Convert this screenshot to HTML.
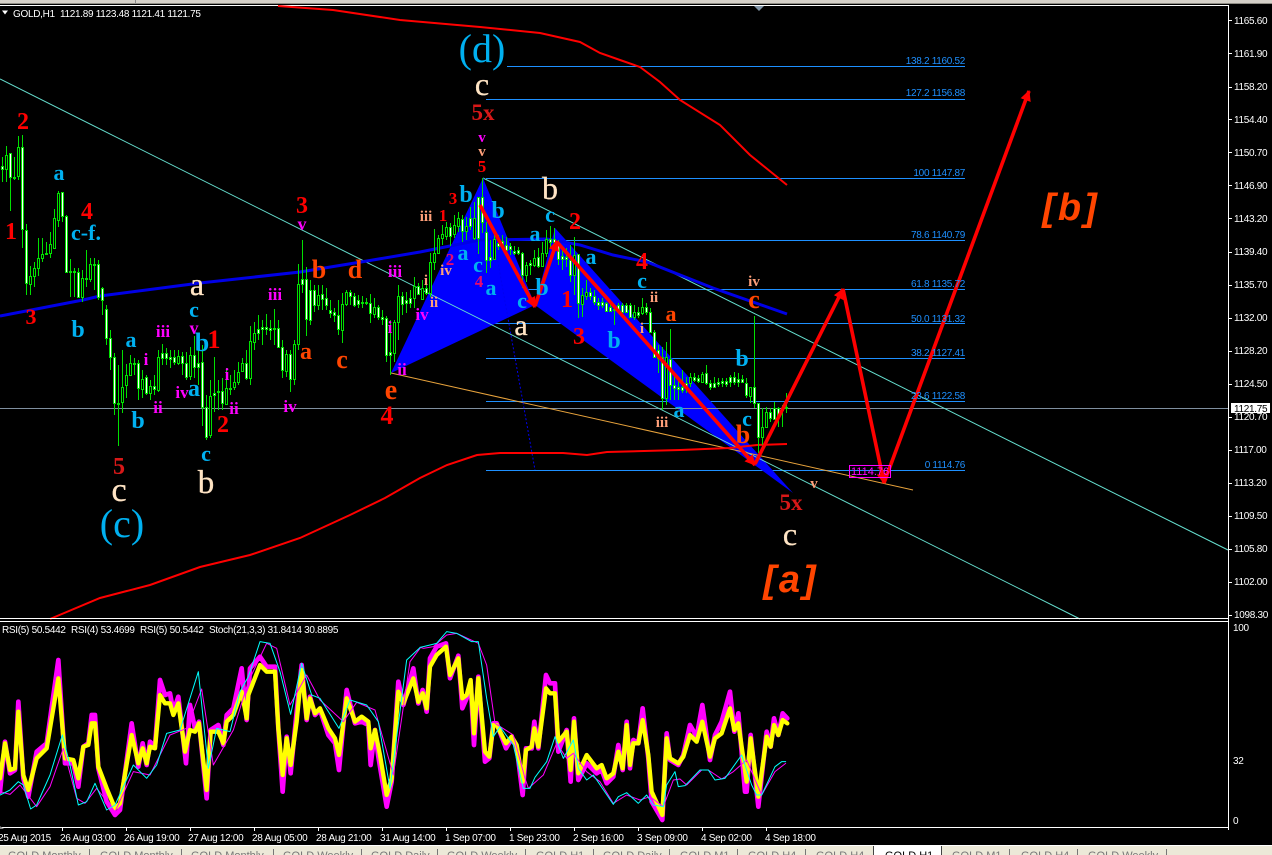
<!DOCTYPE html>
<html><head><meta charset="utf-8"><title>GOLD,H1</title>
<style>
html,body{margin:0;padding:0;background:#000;width:1272px;height:855px;overflow:hidden}
svg{display:block;position:absolute;left:0;top:0}
text{font-family:"Liberation Serif",serif}
.u text,text.u{font-family:"Liberation Sans",sans-serif;font-size:10px;letter-spacing:-.3px}
.l text{text-anchor:middle}
.r{fill:#f00;font-weight:bold}.b{fill:#00b0f0}.w{fill:#ffe4c4;stroke:#ffe4c4;stroke-width:.3}.m{fill:#f0f}.o{fill:#ff4500;font-weight:bold}.s{fill:#ffa07a}.c{fill:#e60a6e;font-weight:bold}.d{fill:#d81818;font-weight:bold}
.t text{font-family:"Liberation Sans",sans-serif;font-size:11px;fill:#777}
</style></head><body>
<svg width="1272" height="855" viewBox="0 0 1272 855" xmlns="http://www.w3.org/2000/svg">
<defs><marker id="h" viewBox="0 0 10 10" refX="9" refY="5" markerWidth="3" markerHeight="3" orient="auto"><path d="M0 0L10 5L0 10z" fill="#f00"/></marker></defs>
<rect width="1272" height="855" fill="#000"/>
<rect width="1272" height="3" fill="#d4d0c8"/><rect y="3" width="1272" height="1" fill="#8f8d85"/>
<rect x="135" width="1" height="3" fill="#888"/>
<rect y="5" width="1229" height="1" fill="#fff"/>
<path d="M754 6H764L759 11z" fill="#8296a8"/>

<!-- fibo lines -->
<path d="M507 66.5H965M486 99.5H965M486 178.5H965M486 240.5H965M486 289.5H965M486 323.5H965M486 358.5H965M486 401.5H965M486 470.5H965" stroke="#1e90ff" fill="none" shape-rendering="crispEdges"/>
<!-- blue harmonic -->
<path d="M391 373L483 178L535 305z" fill="#00f"/>
<path d="M535 305L555 228L793 493z" fill="#00f"/>
<!-- price line -->
<path d="M0 408.5H1228" stroke="#7f8f9f" shape-rendering="crispEdges"/>
<!-- trendlines -->
<path d="M0 79L1080 619M483 178L1228 550" stroke="#66e0d0" fill="none"/>
<path d="M391 373L913 490" stroke="#e8a33c" fill="none"/>
<path d="M483 178L535 470" stroke="#0000f0" stroke-dasharray="2 2" fill="none"/>
<!-- MA -->
<path d="M0 316L83 300L100 296L200 283L300 272L367 261L420 252L430 250L480 240L547 239L580 245L613 255L647 262L713 288L787 314" stroke="#0000e6" stroke-width="3" fill="none"/>
<path d="M278 6L333 10L400 20L480 27L540 33L580 42L600 53L620 60L640 67L660 82L680 100L720 125L750 155L787 185" stroke="#f00" stroke-width="2" fill="none"/>
<path d="M50 619L100 598L150 585L200 567L250 555L300 538L350 515L385 498L420 478L447 465L477 455L500 453L563 453L587 455L607 452L680 450L730 448L757 445L787 444" stroke="#f00" stroke-width="2" fill="none"/>

<!-- candle wicks -->
<path shape-rendering="crispEdges" stroke="#00e000" fill="none" d="M2.5 157V182M6.5 146V182M10.5 153V211M14.5 157V180M18.5 136V180M22.5 135V248M26.5 224V295M30.5 266V295M34.5 262V287M38.5 238V276M42.5 238V262M46.5 242V255M50.5 232V258M54.5 209V248M58.5 191V227M62.5 192V222M66.5 215V273M70.5 259V297M74.5 268V297M78.5 268V297M82.5 270V302M86.5 250V287M90.5 258V282M94.5 258V290M98.5 260V300M102.5 287V315M106.5 305V345M110.5 330V370M114.5 353V415M118.5 365V446M122.5 350V413M126.5 364V398M130.5 355V372M134.5 358V375M138.5 360V400M142.5 370V398M146.5 375V395M150.5 380V400M154.5 375V395M158.5 350V392M162.5 344V365M166.5 348V365M170.5 350V368M174.5 350V365M178.5 350V365M182.5 352V375M186.5 352V380M190.5 347V380M194.5 336V378M198.5 335V385M202.5 345V426M206.5 395V440M210.5 380V438M214.5 357V412M218.5 380V410M222.5 378V410M226.5 368V405M230.5 375V395M234.5 370V390M238.5 362V385M242.5 358V372M246.5 350V380M250.5 326V385M254.5 322V350M258.5 315V340M262.5 320V345M266.5 314V335M270.5 320V340M274.5 309V345M278.5 320V348M282.5 340V378M286.5 350V377M290.5 350V392M294.5 340V385M298.5 264V350M302.5 240V293M306.5 267V336M310.5 280V325M314.5 285V312M318.5 285V310M322.5 285V310M326.5 288V310M330.5 300V318M334.5 308V322M338.5 300V335M342.5 293V343M346.5 290V306M350.5 290V305M354.5 293V307M358.5 295V308M362.5 296V308M366.5 298V305M370.5 294V323M374.5 298V318M378.5 305V320M382.5 310V325M386.5 316V362M390.5 320V375M394.5 320V362M398.5 285V340M402.5 292V315M406.5 292V313M410.5 290V308M414.5 277V308M418.5 283V295M422.5 280V300M426.5 285V295M430.5 253V297M434.5 229V270M438.5 235V253M442.5 225V245M446.5 222V240M450.5 223V246M454.5 215V238M458.5 212V232M462.5 215V242M466.5 217V240M470.5 207V230M474.5 202V240M478.5 197V254M482.5 178V233M486.5 222V273M490.5 240V268M494.5 235V260M498.5 235V250M502.5 235V250M506.5 237V252M510.5 243V255M514.5 246V255M518.5 247V255M522.5 252V288M526.5 262V282M530.5 260V275M534.5 250V267M538.5 248V268M542.5 242V267M546.5 230V257M550.5 226V248M554.5 228V248M558.5 240V265M562.5 250V270M566.5 248V267M570.5 245V282M574.5 237V295M578.5 254V318M582.5 288V317M586.5 280V300M590.5 288V300M594.5 290V305M598.5 298V310M602.5 298V308M606.5 302V312M610.5 302V312M614.5 308V325M618.5 303V312M622.5 303V313M626.5 303V313M630.5 303V318M634.5 305V320M638.5 307V318M642.5 298V315M646.5 303V315M650.5 308V333M654.5 330V358M658.5 345V373M662.5 347V410M666.5 342V405M670.5 329V400M674.5 373V400M678.5 377V400M682.5 370V393M686.5 377V393M690.5 373V387M694.5 373V382M698.5 375V383M702.5 372V383M706.5 365V385M710.5 380V390M714.5 377V388M718.5 378V387M722.5 378V387M726.5 378V387M730.5 375V387M734.5 372V385M738.5 373V387M742.5 375V383M746.5 378V398M750.5 387V403M754.5 316V408M758.5 403V453M762.5 408V445M766.5 407V428M770.5 408V422M774.5 402V420M778.5 407V427M782.5 405V427M786.5 393V413"/>
<!-- white bodies -->
<path shape-rendering="crispEdges" stroke="#00e000" fill="#fff" d="M1.5 166.5h2v3h-2zM9.5 153.5h2v24h-2zM13.5 177.5h2v1h-2zM21.5 147.5h2v82h-2zM25.5 230.5h2v53h-2zM45.5 253.5h2v1h-2zM61.5 192.5h2v24h-2zM65.5 216.5h2v56h-2zM69.5 271.5h2v1h-2zM73.5 271.5h2v1h-2zM77.5 272.5h2v25h-2zM85.5 278.5h2v1h-2zM93.5 264.5h2v1h-2zM97.5 264.5h2v33h-2zM101.5 288.5h2v12h-2zM105.5 309.5h2v29h-2zM109.5 338.5h2v19h-2zM113.5 357.5h2v46h-2zM117.5 403.5h2v1h-2zM133.5 363.5h2v1h-2zM137.5 363.5h2v25h-2zM145.5 377.5h2v16h-2zM153.5 386.5h2v3h-2zM161.5 353.5h2v5h-2zM165.5 353.5h2v5h-2zM169.5 357.5h2v2h-2zM173.5 357.5h2v5h-2zM181.5 356.5h2v7h-2zM185.5 363.5h2v14h-2zM193.5 355.5h2v12h-2zM197.5 363.5h2v4h-2zM201.5 362.5h2v45h-2zM205.5 407.5h2v30h-2zM213.5 393.5h2v2h-2zM217.5 391.5h2v1h-2zM221.5 391.5h2v12h-2zM229.5 388.5h2v1h-2zM245.5 363.5h2v15h-2zM257.5 329.5h2v4h-2zM261.5 327.5h2v2h-2zM265.5 327.5h2v2h-2zM269.5 328.5h2v2h-2zM273.5 328.5h2v1h-2zM277.5 328.5h2v19h-2zM281.5 347.5h2v23h-2zM289.5 354.5h2v25h-2zM301.5 279.5h2v5h-2zM305.5 279.5h2v40h-2zM309.5 290.5h2v30h-2zM313.5 290.5h2v15h-2zM321.5 294.5h2v5h-2zM325.5 298.5h2v7h-2zM329.5 310.5h2v3h-2zM333.5 312.5h2v3h-2zM337.5 315.5h2v14h-2zM349.5 292.5h2v4h-2zM353.5 296.5h2v9h-2zM357.5 300.5h2v4h-2zM361.5 302.5h2v1h-2zM365.5 302.5h2v1h-2zM369.5 303.5h2v10h-2zM377.5 307.5h2v10h-2zM381.5 317.5h2v2h-2zM385.5 318.5h2v37h-2zM389.5 352.5h2v3h-2zM401.5 296.5h2v8h-2zM405.5 300.5h2v3h-2zM409.5 298.5h2v5h-2zM417.5 286.5h2v8h-2zM425.5 288.5h2v5h-2zM449.5 227.5h2v9h-2zM461.5 219.5h2v12h-2zM469.5 218.5h2v8h-2zM477.5 197.5h2v41h-2zM481.5 197.5h2v25h-2zM485.5 232.5h2v28h-2zM489.5 257.5h2v3h-2zM497.5 243.5h2v3h-2zM501.5 241.5h2v6h-2zM505.5 245.5h2v5h-2zM509.5 246.5h2v3h-2zM513.5 251.5h2v2h-2zM517.5 250.5h2v3h-2zM521.5 253.5h2v22h-2zM529.5 263.5h2v2h-2zM537.5 257.5h2v9h-2zM549.5 239.5h2v3h-2zM553.5 239.5h2v3h-2zM557.5 244.5h2v15h-2zM561.5 256.5h2v3h-2zM565.5 257.5h2v2h-2zM569.5 260.5h2v15h-2zM577.5 254.5h2v49h-2zM589.5 292.5h2v4h-2zM593.5 296.5h2v6h-2zM597.5 302.5h2v3h-2zM601.5 302.5h2v3h-2zM605.5 303.5h2v8h-2zM609.5 307.5h2v4h-2zM613.5 309.5h2v1h-2zM617.5 305.5h2v5h-2zM621.5 305.5h2v7h-2zM625.5 305.5h2v7h-2zM629.5 305.5h2v12h-2zM637.5 312.5h2v3h-2zM645.5 307.5h2v5h-2zM649.5 312.5h2v20h-2zM653.5 332.5h2v25h-2zM657.5 350.5h2v8h-2zM661.5 357.5h2v41h-2zM669.5 359.5h2v26h-2zM673.5 385.5h2v3h-2zM677.5 387.5h2v2h-2zM681.5 387.5h2v3h-2zM685.5 383.5h2v4h-2zM693.5 377.5h2v3h-2zM697.5 378.5h2v3h-2zM705.5 373.5h2v10h-2zM709.5 383.5h2v4h-2zM713.5 383.5h2v4h-2zM717.5 382.5h2v2h-2zM721.5 381.5h2v2h-2zM725.5 381.5h2v3h-2zM729.5 377.5h2v5h-2zM733.5 377.5h2v5h-2zM737.5 379.5h2v3h-2zM741.5 379.5h2v3h-2zM745.5 383.5h2v12h-2zM753.5 387.5h2v16h-2zM757.5 403.5h2v34h-2zM769.5 412.5h2v6h-2zM773.5 408.5h2v11h-2zM777.5 408.5h2v7h-2zM781.5 408.5h2v2h-2zM785.5 407.5h2v1h-2z"/>
<!-- hollow bodies -->
<path shape-rendering="crispEdges" stroke="#00e000" fill="#000" d="M5.5 155.5h2v14h-2zM17.5 147.5h2v29h-2zM29.5 276.5h2v8h-2zM33.5 268.5h2v8h-2zM37.5 258.5h2v10h-2zM41.5 254.5h2v4h-2zM49.5 244.5h2v9h-2zM53.5 218.5h2v30h-2zM57.5 193.5h2v27h-2zM81.5 278.5h2v19h-2zM89.5 264.5h2v15h-2zM121.5 387.5h2v15h-2zM125.5 375.5h2v10h-2zM129.5 363.5h2v12h-2zM141.5 379.5h2v10h-2zM149.5 386.5h2v7h-2zM157.5 357.5h2v33h-2zM177.5 356.5h2v7h-2zM189.5 355.5h2v21h-2zM209.5 396.5h2v39h-2zM225.5 388.5h2v16h-2zM233.5 382.5h2v5h-2zM237.5 372.5h2v10h-2zM241.5 363.5h2v8h-2zM249.5 341.5h2v37h-2zM253.5 333.5h2v9h-2zM285.5 354.5h2v17h-2zM293.5 344.5h2v35h-2zM297.5 284.5h2v60h-2zM317.5 295.5h2v10h-2zM341.5 304.5h2v26h-2zM345.5 292.5h2v12h-2zM373.5 307.5h2v7h-2zM393.5 322.5h2v31h-2zM397.5 296.5h2v26h-2zM413.5 286.5h2v12h-2zM421.5 288.5h2v11h-2zM429.5 262.5h2v31h-2zM433.5 253.5h2v9h-2zM437.5 238.5h2v15h-2zM441.5 234.5h2v4h-2zM445.5 227.5h2v9h-2zM453.5 225.5h2v9h-2zM457.5 218.5h2v8h-2zM465.5 226.5h2v5h-2zM473.5 218.5h2v20h-2zM493.5 239.5h2v20h-2zM525.5 265.5h2v10h-2zM533.5 258.5h2v7h-2zM541.5 253.5h2v13h-2zM545.5 239.5h2v14h-2zM573.5 255.5h2v20h-2zM581.5 295.5h2v9h-2zM585.5 292.5h2v4h-2zM633.5 312.5h2v5h-2zM641.5 307.5h2v6h-2zM665.5 357.5h2v41h-2zM689.5 377.5h2v6h-2zM701.5 374.5h2v8h-2zM749.5 387.5h2v9h-2zM761.5 427.5h2v10h-2zM765.5 412.5h2v15h-2z"/>

<!-- red wave arrows -->
<g stroke="#f00" stroke-width="3.6" fill="none">
<line x1="480" y1="205" x2="535" y2="307" marker-end="url(#h)"/>
<line x1="535" y1="306" x2="557" y2="241" marker-end="url(#h)"/>
<line x1="557" y1="242" x2="755" y2="465" marker-end="url(#h)"/>
<line x1="755" y1="464" x2="843" y2="289" marker-end="url(#h)"/>
<line x1="843" y1="289" x2="884" y2="483" marker-end="url(#h)"/>
<line x1="884" y1="483" x2="1029" y2="91" marker-end="url(#h)"/>
</g>

<!-- magenta price box -->
<rect x="849.5" y="465.5" width="41" height="12" fill="none" stroke="#f0f"/>
<text x="851" y="475" font-size="11" fill="#f0f" style="font-family:'Liberation Sans',sans-serif">1114.76</text>

<!-- fibo labels -->
<g class="u" fill="#1e90ff" text-anchor="end">
<text x="965" y="64">138.2 1160.52</text><text x="965" y="96">127.2 1156.88</text><text x="965" y="176">100 1147.87</text><text x="965" y="238">78.6 1140.79</text><text x="965" y="287">61.8 1135.72</text><text x="965" y="322">50.0 1131.32</text><text x="965" y="356">38.2 1127.41</text><text x="965" y="399">23.6 1122.58</text><text x="965" y="468">0 1114.76</text>
</g>

<!-- wave labels -->
<g class="l">
<text x="482" y="62" font-size="40" class="b">(d)</text>
<text x="482" y="95" font-size="32" class="w">c</text>
<text x="483" y="120" font-size="23" class="d">5x</text>
<text x="482" y="142" font-size="15" class="m" font-weight="bold">v</text>
<text x="482" y="156" font-size="15" class="s" font-weight="bold">v</text>
<text x="482" y="172" font-size="17" class="r">5</text>
<text x="23" y="129" font-size="24" class="r">2</text>
<text x="59" y="180" font-size="22" class="b" font-weight="bold">a</text>
<text x="87" y="219" font-size="24" class="r">4</text>
<text x="11" y="239" font-size="24" class="r">1</text>
<text x="86" y="240" font-size="22" class="b" font-weight="bold">c-f.</text>
<text x="31" y="324" font-size="22" class="r">3</text>
<text x="78" y="337" font-size="24" class="b" font-weight="bold">b</text>
<text x="302" y="213" font-size="24" class="r">3</text>
<text x="302" y="230" font-size="18" class="m" font-weight="bold">v</text>
<text x="319" y="278" font-size="26" class="o">b</text>
<text x="355" y="278" font-size="26" class="o">d</text>
<text x="395" y="277" font-size="17" class="m" font-weight="bold">iii</text>
<text x="197" y="295" font-size="32" class="w">a</text>
<text x="275" y="300" font-size="17" class="m" font-weight="bold">iii</text>
<text x="194" y="317" font-size="22" class="b" font-weight="bold">c</text>
<text x="194" y="334" font-size="18" class="m" font-weight="bold">v</text>
<text x="202" y="351" font-size="26" class="b" font-weight="bold">b</text>
<text x="214" y="348" font-size="26" class="r">1</text>
<text x="131" y="347" font-size="22" class="b" font-weight="bold">a</text>
<text x="146" y="365" font-size="17" class="m" font-weight="bold">i</text>
<text x="163" y="337" font-size="17" class="m" font-weight="bold">iii</text>
<text x="158" y="413" font-size="17" class="m" font-weight="bold">ii</text>
<text x="138" y="428" font-size="24" class="b" font-weight="bold">b</text>
<text x="182" y="398" font-size="17" class="m" font-weight="bold">iv</text>
<text x="194" y="396" font-size="24" class="b" font-weight="bold">a</text>
<text x="119" y="474" font-size="24" class="d">5</text>
<text x="119" y="501" font-size="34" class="w">c</text>
<text x="122" y="537" font-size="40" class="b">(c)</text>
<text x="206" y="461" font-size="22" class="b" font-weight="bold">c</text>
<text x="206" y="493" font-size="33" class="w">b</text>
<text x="223" y="432" font-size="24" class="r">2</text>
<text x="227" y="380" font-size="17" class="m" font-weight="bold">i</text>
<text x="234" y="414" font-size="17" class="m" font-weight="bold">ii</text>
<text x="306" y="359" font-size="24" class="o">a</text>
<text x="290" y="412" font-size="17" class="m" font-weight="bold">iv</text>
<text x="342" y="368" font-size="26" class="o">c</text>
<text x="390" y="333" font-size="17" class="m" font-weight="bold">i</text>
<text x="402" y="375" font-size="17" class="m" font-weight="bold">ii</text>
<text x="391" y="399" font-size="28" class="o">e</text>
<text x="387" y="424" font-size="26" class="r">4</text>
<text x="453" y="204" font-size="17" class="r">3</text>
<text x="466" y="202" font-size="24" class="b" font-weight="bold">b</text>
<text x="426" y="221" font-size="15" class="s" font-weight="bold">iii</text>
<text x="443" y="221" font-size="17" class="r">1</text>
<text x="498" y="218" font-size="24" class="b" font-weight="bold">b</text>
<text x="463" y="260" font-size="22" class="b" font-weight="bold">a</text>
<text x="450" y="265" font-size="17" class="c">2</text>
<text x="426" y="285" font-size="15" class="s" font-weight="bold">i</text>
<text x="446" y="275" font-size="15" class="s" font-weight="bold">iv</text>
<text x="478" y="272" font-size="22" class="b" font-weight="bold">c</text>
<text x="479" y="287" font-size="17" class="c">4</text>
<text x="491" y="295" font-size="22" class="b" font-weight="bold">a</text>
<text x="434" y="307" font-size="15" class="s" font-weight="bold">ii</text>
<text x="422" y="320" font-size="17" class="m" font-weight="bold">iv</text>
<text x="522" y="308" font-size="22" class="b" font-weight="bold">c</text>
<text x="542" y="295" font-size="24" class="b" font-weight="bold">b</text>
<text x="521" y="335" font-size="30" class="w">a</text>
<text x="550" y="199" font-size="32" class="w">b</text>
<text x="550" y="222" font-size="22" class="b" font-weight="bold">c</text>
<text x="535" y="241" font-size="22" class="b" font-weight="bold">a</text>
<text x="575" y="229" font-size="24" class="r">2</text>
<text x="591" y="264" font-size="22" class="b" font-weight="bold">a</text>
<text x="642" y="269" font-size="24" class="r">4</text>
<text x="567" y="307" font-size="24" class="r">1</text>
<text x="579" y="344" font-size="24" class="r">3</text>
<text x="614" y="348" font-size="24" class="b" font-weight="bold">b</text>
<text x="642" y="288" font-size="22" class="b" font-weight="bold">c</text>
<text x="654" y="302" font-size="15" class="s" font-weight="bold">ii</text>
<text x="642" y="333" font-size="15" class="s" font-weight="bold">i</text>
<text x="671" y="321" font-size="22" class="o">a</text>
<text x="662" y="427" font-size="15" class="s" font-weight="bold">iii</text>
<text x="679" y="417" font-size="22" class="b" font-weight="bold">a</text>
<text x="754" y="286" font-size="15" class="s" font-weight="bold">iv</text>
<text x="754" y="308" font-size="26" class="o">c</text>
<text x="742" y="366" font-size="24" class="b" font-weight="bold">b</text>
<text x="747" y="426" font-size="22" class="b" font-weight="bold">c</text>
<text x="743" y="443" font-size="26" class="o">b</text>
<text x="791" y="510" font-size="23" class="d">5x</text>
<text x="814" y="488" font-size="15" class="s" font-weight="bold">v</text>
<text x="790" y="545" font-size="32" class="w">c</text>
<text x="791" y="592" font-size="38" class="o" font-weight="bold" font-style="italic" letter-spacing="3" style="font-family:'Liberation Sans',sans-serif">[a]</text>
<text x="1071" y="220" font-size="38" class="o" font-weight="bold" font-style="italic" letter-spacing="3" style="font-family:'Liberation Sans',sans-serif">[b]</text>
</g>

<!-- headers -->
<path d="M2 10.5H8L5 14.5z" fill="#fff"/>
<text class="u" x="13" y="17" fill="#fff">GOLD,H1  </text>
<text class="u" x="60" y="17" fill="#fff">1121.89 1123.48 1121.41 1121.75</text>

<!-- frames -->
<path d="M0 618.5H1228M0 621.5H1228M0 827.5H1228M1228.5 5V830" stroke="#fff" fill="none" shape-rendering="crispEdges"/>
<path d="M1229 20.5h3M1229 53.5h3M1229 87.5h3M1229 119.5h3M1229 152.5h3M1229 185.5h3M1229 218.5h3M1229 252.5h3M1229 285.5h3M1229 318.5h3M1229 351.5h3M1229 384.5h3M1229 417.5h3M1229 450.5h3M1229 483.5h3M1229 516.5h3M1229 549.5h3M1229 582.5h3M1229 615.5h3M62.5 828v3M126.5 828v3M190.5 828v3M254.5 828v3M318.5 828v3M382.5 828v3M446.5 828v3M510.5 828v3M574.5 828v3M638.5 828v3M702.5 828v3M766.5 828v3" stroke="#fff" fill="none" shape-rendering="crispEdges"/>
<g class="u" fill="#fff">
<text x="1234" y="24">1165.60</text><text x="1234" y="57">1161.90</text><text x="1234" y="90">1158.20</text><text x="1234" y="123">1154.40</text><text x="1234" y="156">1150.70</text><text x="1234" y="189">1146.90</text><text x="1234" y="222">1143.20</text><text x="1234" y="255">1139.40</text><text x="1234" y="288">1135.70</text><text x="1234" y="321">1132.00</text><text x="1234" y="354">1128.20</text><text x="1234" y="387">1124.50</text><text x="1234" y="420">1120.70</text><text x="1234" y="453">1117.00</text><text x="1234" y="486">1113.20</text><text x="1234" y="519">1109.50</text><text x="1234" y="552">1105.80</text><text x="1234" y="585">1102.00</text><text x="1234" y="618">1098.30</text>
<text x="1233" y="631">100</text><text x="1233" y="764">32</text><text x="1233" y="824">0</text>
<text x="2" y="633">RSI(5) 50.5442</text><text x="71" y="633">RSI(4) 53.4699</text><text x="140" y="633">RSI(5) 50.5442</text><text x="209" y="633">Stoch(21,3,3) 31.8414 30.8895</text>
<text x="-2" y="841">25 Aug 2015</text><text x="60" y="841">26 Aug 03:00</text><text x="124" y="841">26 Aug 19:00</text><text x="188" y="841">27 Aug 12:00</text><text x="252" y="841">28 Aug 05:00</text><text x="316" y="841">28 Aug 21:00</text><text x="380" y="841">31 Aug 14:00</text><text x="445" y="841">1 Sep 07:00</text><text x="509" y="841">1 Sep 23:00</text><text x="573" y="841">2 Sep 16:00</text><text x="637" y="841">3 Sep 09:00</text><text x="701" y="841">4 Sep 02:00</text><text x="765" y="841">4 Sep 18:00</text>
</g>
<rect x="1231" y="403" width="39" height="10" fill="#fff"/>
<text class="u" x="1234" y="412" fill="#000">1121.75</text>
<path d="M0 826L4 829H0z" fill="#888"/>

<!-- indicator -->
<g transform="translate(0,615) scale(.33333)" fill="none" stroke-linejoin="round" stroke-linecap="round">
<g stroke-width="14" stroke="#f0f">
<path d="M0 530L15 380L30 475L45 465L55 260L70 490L85 545L110 410L140 385L175 135L195 445L220 445L235 515L250 395L265 385L275 300L285 300L295 460L320 560L345 600L360 585L395 325L415 455L428 385L440 450L450 380L465 395L480 195L495 240L510 235L520 290L535 245L558 445L570 270L585 340L597 320L620 550L632 345L655 330L670 390L680 300L700 280L725 160L740 315L750 160L780 125L800 155L825 155L835 340L848 530L860 365L872 475L890 290L905 150L920 315L930 245L945 300L960 285L985 360L1005 385L1017 465L1040 225L1065 325L1085 320L1105 330L1112 450L1125 345L1135 425L1160 575L1175 500L1195 200L1210 270L1240 160L1255 265"/>
<path transform="translate(1200,0)" d="M55 265L68 225L80 290L90 130L110 95L138 85L150 190L175 122L187 280L200 250L212 205L222 390L235 185L255 440L268 430L280 325L290 325L318 400L335 370L350 395L368 540L378 400L395 400L403 320L415 400L438 180L450 205L465 205L475 410L500 345L512 500L522 310L535 495L560 445L590 475L605 465L620 505L640 485L655 390L668 465L680 320L690 460L700 375L715 385L728 280L745 430L755 560L787 615L800 355L810 435L835 450L850 420L870 330L890 365L907 270L930 435L945 360L965 320L990 230L1003 350L1015 295L1035 530L1040 530L1052 360L1075 575L1100 350L1112 395L1122 310L1135 360L1148 295L1162 310"/>
</g>
<g stroke-width="13" stroke="#ff0">
<path d="M0 490L15 385L30 465L45 460L55 290L70 480L85 525L110 430L140 400L175 190L195 430L220 435L235 490L250 395L265 390L275 325L285 325L295 455L320 520L345 580L360 565L395 360L415 445L428 400L440 445L450 395L465 400L480 240L495 265L510 265L520 300L535 265L555 410L570 345L585 350L597 325L620 525L632 350L655 350L670 385L680 320L700 300L725 230L740 310L745 240L780 150L800 170L825 170L835 340L848 480L860 370L872 450L890 320L905 165L920 310L930 250L945 295L960 280L985 340L1005 370L1017 420L1040 250L1065 320L1085 305L1105 320L1112 400L1125 345L1140 420L1160 540L1175 490L1195 230L1210 265L1240 190L1255 260"/>
<path transform="translate(1200,0)" d="M55 260L68 235L80 280L90 155L110 120L138 95L150 180L175 130L187 250L200 240L212 195L222 355L235 190L255 410L268 425L280 330L290 330L318 385L335 365L350 390L368 500L378 405L395 395L403 340L415 395L438 220L450 235L465 235L475 380L500 350L512 465L522 320L535 475L560 420L590 460L605 450L620 490L640 475L655 410L668 460L680 330L690 450L700 385L715 385L728 315L745 420L755 530L787 600L800 370L810 430L835 445L850 425L870 360L890 380L907 320L930 425L945 370L965 355L990 280L1003 345L1015 325L1035 465L1040 500L1052 370L1075 545L1100 365L1112 395L1122 330L1135 360L1148 315L1162 325"/>
</g>
<g stroke-width="3" stroke="#f0f">
<path d="M0 530L30 538L60 510L110 575L150 515L190 400L230 550L255 565L290 520L345 590L400 470L450 480L510 360L560 340L605 222L640 450L700 345L745 200L800 85L830 100L870 270L920 180L960 255L1030 320L1070 262L1125 285L1180 480L1230 140L1260 100"/>
<path transform="translate(1200,0)" d="M60 97L70 100L100 95L140 60L170 55L235 85L260 150L285 325L340 360L375 490L385 520L430 480L470 385L500 430L520 415L560 470L600 500L640 565L680 540L720 555L750 545L790 575L820 495L840 492L860 510L905 465L925 465L965 492L1000 470L1040 435L1085 540L1125 470L1157 445"/>
</g>
<g stroke-width="3" stroke="#0ff">
<path d="M0 540L30 525L55 500L70 510L92 582L110 570L150 480L187 360L210 450L235 570L260 560L285 505L320 585L345 570L400 450L440 490L470 450L500 355L540 345L595 170L625 460L650 340L690 350L720 230L745 185L780 80L810 85L840 170L872 298L905 145L935 240L960 250L1017 340L1050 255L1100 270L1135 320L1170 520L1220 135L1260 98"/>
<path transform="translate(1200,0)" d="M60 97L70 95L90 90L110 85L140 50L170 55L215 80L235 80L260 250L280 365L300 335L340 390L370 520L390 520L405 487L440 440L465 365L490 430L520 375L535 460L560 495L580 480L640 568L655 545L680 533L715 565L740 540L760 570L790 575L800 510L825 470L835 515L855 512L900 465L925 465L945 495L975 490L1025 420L1055 510L1070 540L1085 540L1125 455L1145 440L1157 440"/>
</g>
</g>

<!-- tab bar -->
<rect y="846" width="1272" height="9" fill="#ece9d8"/>
<rect y="845" width="1272" height="1" fill="#fff"/>
<rect x="873" y="846" width="68" height="9" fill="#fff"/>
<path d="M873.5 846V855M941.5 846V855" stroke="#444" shape-rendering="crispEdges"/>
<path d="M89.5 849V855M181.5 849V855M273.5 849V855M361.5 849V855M437.5 849V855M525.5 849V855M593.5 849V855M669.5 849V855M737.5 849V855M805.5 849V855M1009.5 849V855M1077.5 849V855M1166.5 849V855" stroke="#777" shape-rendering="crispEdges"/>
<g class="t">
<text x="8" y="859">GOLD,Monthly</text><text x="100" y="859">GOLD,Monthly</text><text x="191" y="859">GOLD,Monthly</text><text x="283" y="859">GOLD,Weekly</text><text x="371" y="859">GOLD,Daily</text><text x="447" y="859">GOLD,Weekly</text><text x="536" y="859">GOLD,H1</text><text x="603" y="859">GOLD,Daily</text><text x="680" y="859">GOLD,M1</text><text x="748" y="859">GOLD,H4</text><text x="816" y="859">GOLD,H4</text><text x="885" y="859" style="fill:#000">GOLD,H1</text><text x="952" y="859">GOLD,M1</text><text x="1021" y="859">GOLD,H4</text><text x="1088" y="859">GOLD,Weekly</text>
</g>
</svg>
</body></html>
